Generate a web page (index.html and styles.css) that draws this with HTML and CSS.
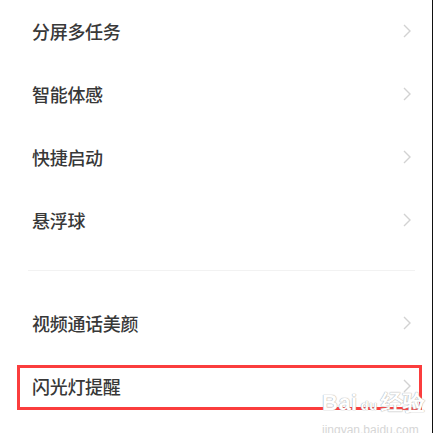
FILE: index.html
```html
<!DOCTYPE html>
<html>
<head>
    <meta charset="UTF-8">
    <title>设置</title>
    <link rel="stylesheet" href="styles.css">
</head>
<body>
    <div class="screen">
        <div class="group">
            <div class="row"><span class="label">分屏多任务</span><svg class="arrow" viewBox="0 0 8 14"><polyline points="1,1 7,7 1,13"/></svg></div>
            <div class="row"><span class="label">智能体感</span><svg class="arrow" viewBox="0 0 8 14"><polyline points="1,1 7,7 1,13"/></svg></div>
            <div class="row"><span class="label">快捷启动</span><svg class="arrow" viewBox="0 0 8 14"><polyline points="1,1 7,7 1,13"/></svg></div>
            <div class="row"><span class="label">悬浮球</span><svg class="arrow" viewBox="0 0 8 14"><polyline points="1,1 7,7 1,13"/></svg></div>
        </div>
        <div class="divider"></div>
        <div class="group">
            <div class="row"><span class="label">视频通话美颜</span><svg class="arrow" viewBox="0 0 8 14"><polyline points="1,1 7,7 1,13"/></svg></div>
            <div class="row marked"><span class="label">闪光灯提醒</span><svg class="arrow" viewBox="0 0 8 14"><polyline points="1,1 7,7 1,13"/></svg></div>
        </div>
        <div class="watermark">
            <div class="wm-logo">Bai<span class="paw">du</span>经验</div>
            <div class="wm-url">jingyan.baidu.com</div>
        </div>
    </div>
</body>
</html>
```

FILE: styles.css
```css
body {
    margin: 0;
    background: #fff;
    font-family: "Noto Sans CJK SC", "Noto Sans", sans-serif;
}

.screen {
    position: relative;
    width: 433px;
    height: 433px;
    border-right: 1px solid #111;
    box-sizing: border-box;
    background: #fff;
}

.row {
    position: relative;
    height: 63px;
    display: flex;
    align-items: center;
    justify-content: space-between;
    padding: 0 21px 1px 32px;
    box-sizing: border-box;
}

.label {
    font-size: 18px;
    font-weight: 500;
    color: #383838;
    letter-spacing: -0.3px;
}

.arrow {
    width: 8px;
    height: 14px;
    fill: none;
    stroke: #d2d2d2;
    stroke-width: 1.4;
}

.divider {
    height: 1px;
    margin: 18px 17px 21px 28px;
    background: #f2f2f2;
}

.marked::after {
    content: "";
    position: absolute;
    left: 17px;
    right: 10px;
    top: 10px;
    bottom: 8px;
    border: 3px solid #fb3d3d;
}

.watermark {
    position: absolute;
    left: 322px;
    top: 392px;
    color: #fff;
    text-shadow: 0 0 1px #aaa, 0 0 1px #aaa;
    font-family: "Liberation Sans", sans-serif;
    line-height: 1;
}

.wm-logo {
    font-size: 22px;
    font-weight: bold;
    letter-spacing: 0.5px;
}

.paw {
    font-size: 13px;
    margin: 0 3px;
}

.wm-url {
    margin-top: 10px;
    font-size: 12px;
    color: #d6d6d6;
    text-shadow: none;
}
```
